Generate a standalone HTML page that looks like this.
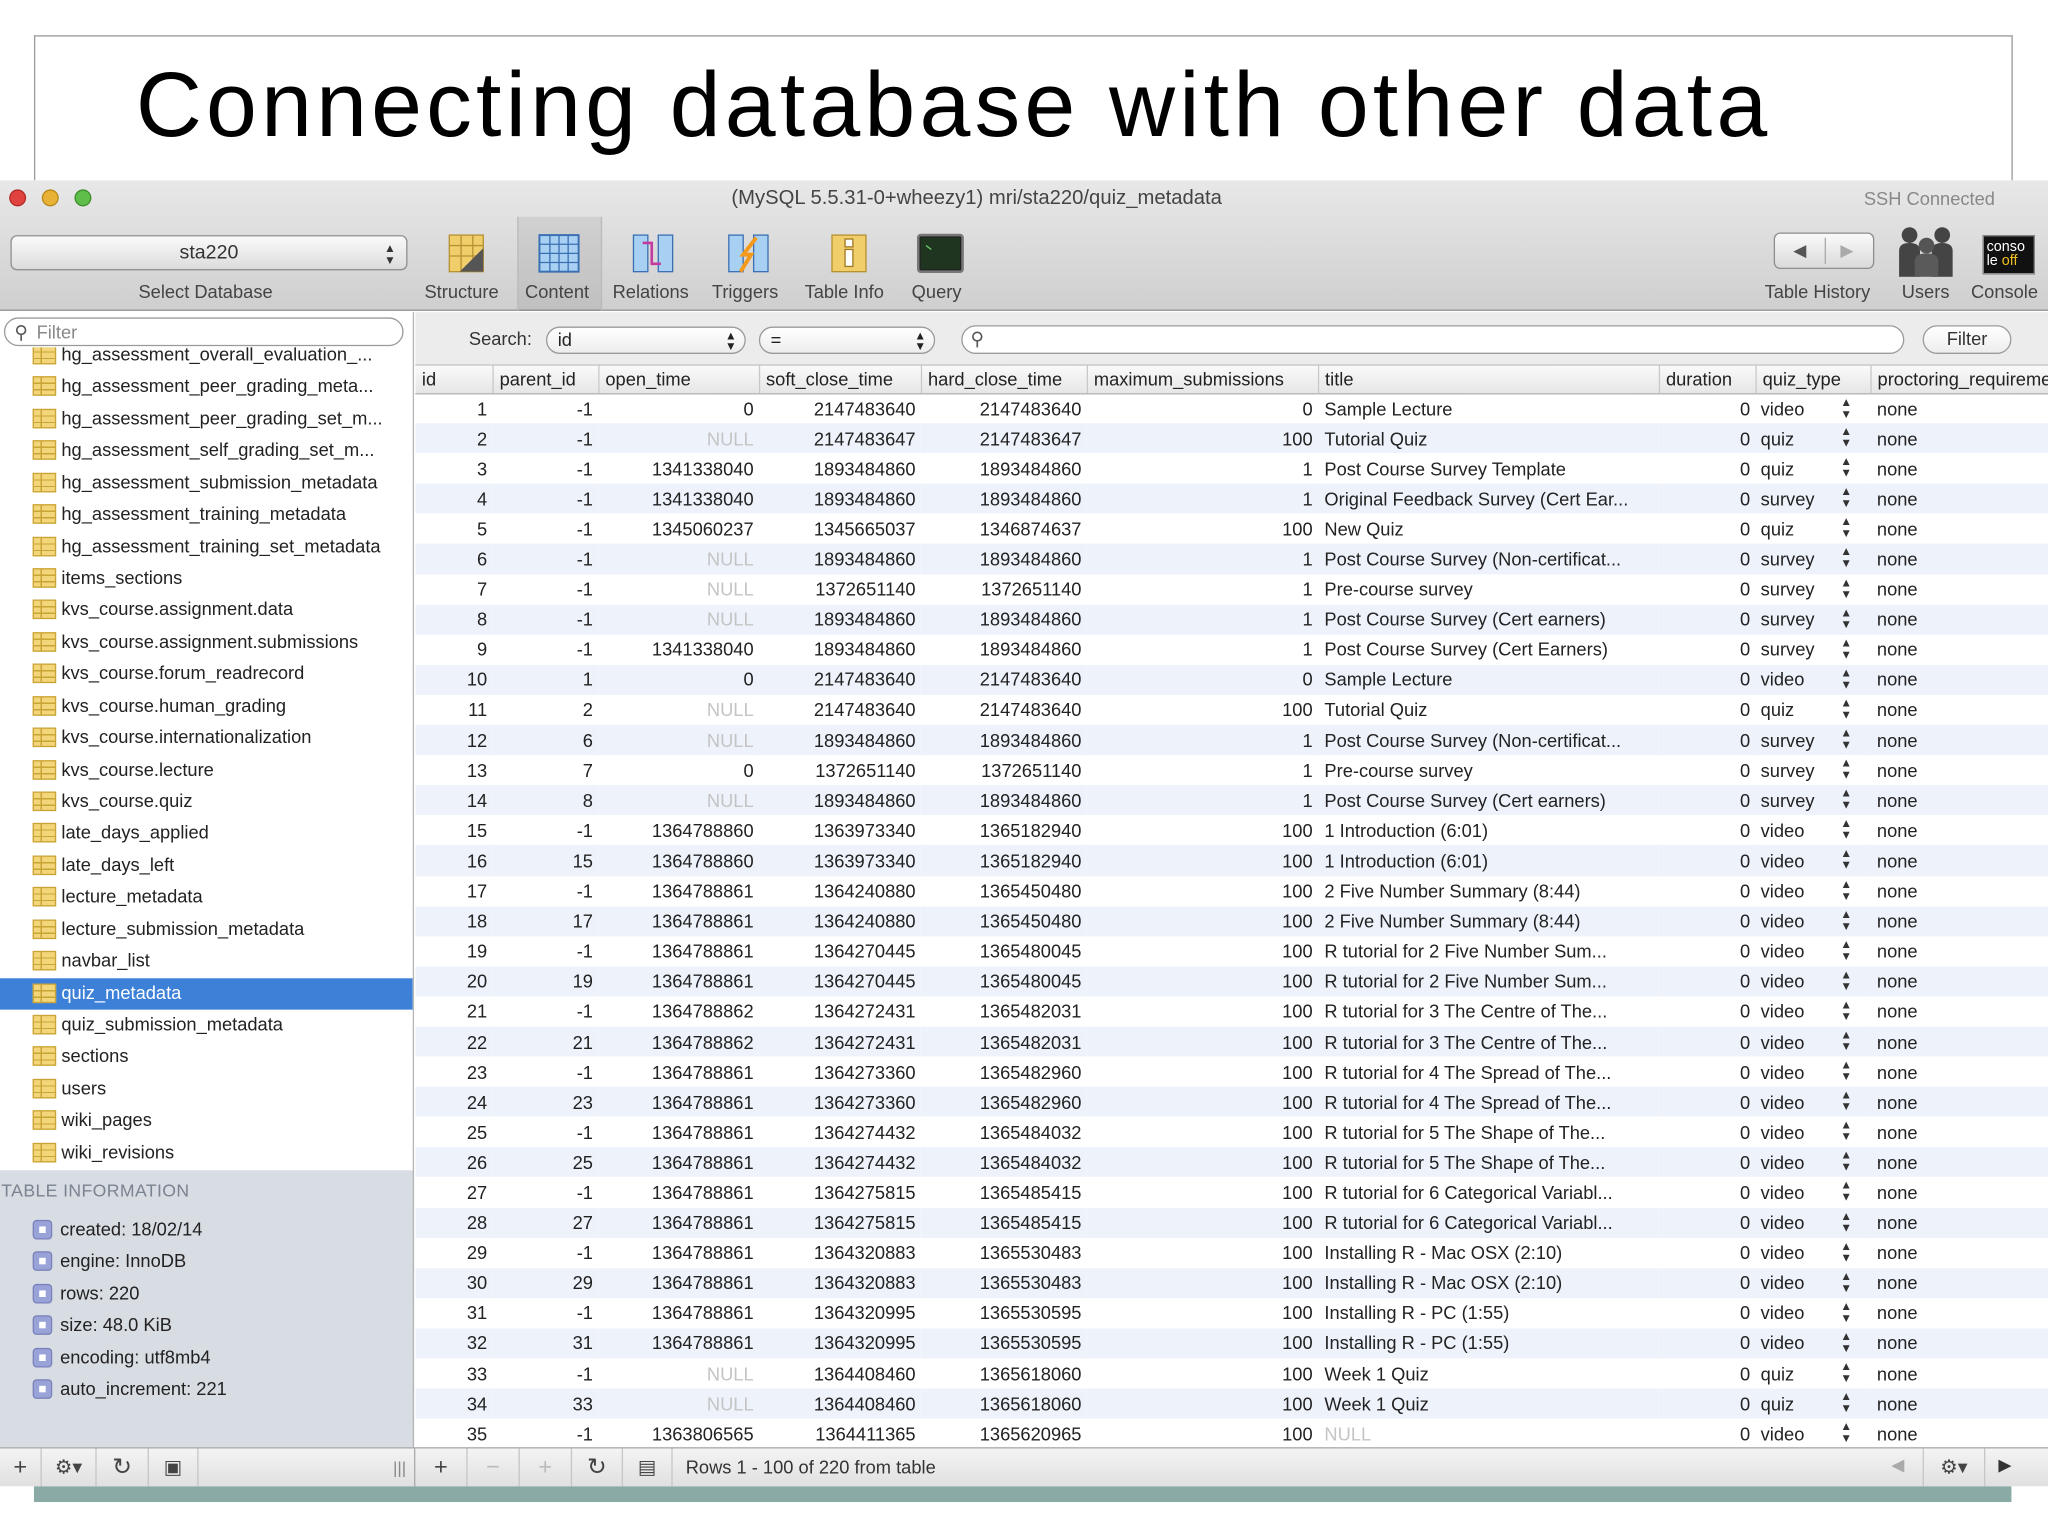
<!DOCTYPE html>
<html><head><meta charset="utf-8">
<style>
*{margin:0;padding:0;box-sizing:border-box}
html,body{width:2048px;height:1536px;overflow:hidden;background:#fff}
#w{position:absolute;left:0;top:0;width:1568px;height:1176px;transform:scale(1.306122);transform-origin:0 0;font-family:"Liberation Sans",sans-serif;color:#222}
.abs{position:absolute}
#slide{left:26px;top:27px;width:1515px;height:120px;border:1px solid #9a9a9a;border-bottom:none}
#title{left:104px;top:40px;font-size:70px;color:#000;letter-spacing:3.2px;white-space:nowrap}
#win{left:0;top:138px;width:1568px;height:1000px;background:#fff;overflow:hidden}
#tb{left:0;top:0;width:1568px;height:100px;background:linear-gradient(#e8e8e8,#cfcfcf);border-bottom:1px solid #8e8e8e}
.light{width:13px;height:13px;border-radius:50%;top:7px}
.tbl{font-size:14px;color:#444;top:77px;white-space:nowrap}
.ic{top:40px;width:32px;height:32px}
#side{left:0;top:101px;width:317px;height:869px;background:#fff;border-right:1px solid #b5b5b5}
.si{position:absolute;left:47px;font-size:14px;color:#222;white-space:nowrap}
.tic{position:absolute;left:25px;width:18px;height:15px;background:#f3d67a;border:1px solid #c9a436;background-image:linear-gradient(90deg,transparent 5px,#c9a436 5px,#c9a436 6px,transparent 6px),linear-gradient(transparent 4px,#c9a436 4px,#c9a436 5px,transparent 5px,transparent 9px,#c9a436 9px,#c9a436 10px,transparent 10px)}
#info{left:0;top:758px;width:317px;height:212px;background:#d8dce3;border-right:1px solid #b5b5b5}
.ii{position:absolute;left:46px;font-size:14px;color:#222}
.ib{position:absolute;left:25px;width:15px;height:15px;background:#9aa3d8;border:1px solid #7a82bb;border-radius:3px}
.ib:after{content:"";position:absolute;left:4px;top:4px;width:5px;height:5px;background:#fff}
#search{left:318px;top:101px;width:1250px;height:41px;background:#ececec;border-bottom:1px solid #c0c0c0}
.pill{position:absolute;border:1px solid #9b9b9b;border-radius:11px;background:linear-gradient(#fff,#ededed);height:21px;font-size:14px;padding-left:8px;line-height:19px}
#grid{left:318px;top:142px;width:1250px}
table{border-collapse:collapse;table-layout:fixed;width:1290px;font-size:14px}
th{height:21px;font-weight:normal;text-align:left;padding-left:5px;border-right:1px solid #c8c8c8;background:linear-gradient(#fafafa,#e6e6e6);border-bottom:1px solid #b8b8b8;white-space:nowrap;overflow:hidden}
td{height:23.1px;white-space:nowrap;overflow:hidden;padding:0 4px;color:#222}
tr:nth-child(even) td{background:#eef3fb}
td.r{text-align:right}
td.n{color:#c4c4c4;text-align:right}
td.t{padding-left:5px}
td.q{position:relative}
td.q span{position:absolute;right:14px;top:2px;font-size:9px;color:#333;line-height:9px}
#bot{left:0;top:970px;width:1568px;height:30px;background:linear-gradient(#f4f4f4,#e0e0e0);border-top:1px solid #a8a8a8;font-size:14px}
.bb{position:absolute;top:0;height:30px;border-right:1px solid #c6c6c6;text-align:center;line-height:29px;font-size:18px;color:#444}
#teal{left:26px;top:1138px;width:1514px;height:12px;background:#8aaaa6}
</style></head><body><div id="w">
<div id="slide" class="abs"></div>
<div id="title" class="abs">Connecting database with other data</div>
<div id="win" class="abs">
 <div id="tb" class="abs">
  <div class="abs light" style="left:7px;background:#e0433f;border:1px solid #b02a26"></div>
  <div class="abs light" style="left:32px;background:#e8b236;border:1px solid #b88816"></div>
  <div class="abs light" style="left:57px;background:#5fbd4a;border:1px solid #3b8e2a"></div>
  <div class="abs" style="left:560px;top:5px;font-size:15.5px;color:#444;white-space:nowrap">(MySQL 5.5.31-0+wheezy1) mri/sta220/quiz_metadata</div>
  <div class="abs" style="left:1427px;top:6px;font-size:14px;color:#888">SSH Connected</div>
  <div class="abs" style="left:8px;top:42px;width:304px;height:27px;border:1px solid #909090;border-radius:5px;background:linear-gradient(#fafafa,#dcdcdc);text-align:center;font-size:15px;line-height:25px;color:#333">sta220<span style="position:absolute;right:8px;font-size:9px;line-height:9px;top:5px">▲<br>▼</span></div>
  <div class="abs tbl" style="left:106px">Select Database</div>
  <div class="abs" style="left:396px;top:28px;width:65px;height:72px;background:rgba(0,0,0,0.07);border-left:1px solid #bbb;border-right:1px solid #bbb"></div>
  <svg class="abs ic" style="left:342px" viewBox="0 0 32 32"><rect x="2" y="2" width="26" height="28" fill="#f0cf6a" stroke="#b89030"/><path d="M2 10H28M2 18H28M11 2V30M20 2V30" stroke="#b89030"/><path d="M10 30L28 12V30Z" fill="#555"/></svg>
  <svg class="abs ic" style="left:412px" viewBox="0 0 32 32"><rect x="1" y="2" width="30" height="28" fill="#a8d0f2" stroke="#3b6fb4" stroke-width="1.5"/><path d="M1 9H31M1 16H31M1 23H31M9 2V30M16 2V30M23 2V30" stroke="#3b6fb4"/></svg>
  <svg class="abs ic" style="left:484px" viewBox="0 0 32 32"><rect x="1" y="2" width="11" height="28" fill="#a8d0f2" stroke="#3b6fb4"/><rect x="20" y="2" width="11" height="28" fill="#a8d0f2" stroke="#3b6fb4"/><path d="M8 8H15V24H22" stroke="#c33aa0" stroke-width="2" fill="none"/></svg>
  <svg class="abs ic" style="left:557px" viewBox="0 0 32 32"><rect x="1" y="2" width="11" height="28" fill="#a8d0f2" stroke="#3b6fb4"/><rect x="20" y="2" width="11" height="28" fill="#a8d0f2" stroke="#3b6fb4"/><path d="M22 4L12 17H18L10 30" stroke="#f39a1c" stroke-width="3" fill="none"/></svg>
  <svg class="abs ic" style="left:634px" viewBox="0 0 32 32"><rect x="3" y="2" width="26" height="28" fill="#f0cf6a" stroke="#b89030"/><rect x="13" y="5" width="6" height="6" fill="#fff" stroke="#a07820"/><rect x="13" y="13" width="6" height="13" fill="#fff" stroke="#a07820"/></svg>
  <svg class="abs ic" style="left:702px;width:36px" viewBox="0 0 36 32"><rect x="1" y="2" width="34" height="28" rx="2" fill="#222" stroke="#777" stroke-width="2"/><rect x="3" y="4" width="30" height="24" fill="#1f3520"/><path d="M7 10L11 13" stroke="#6c6" /></svg>
  <div class="abs tbl" style="left:325px">Structure</div>
  <div class="abs tbl" style="left:402px">Content</div>
  <div class="abs tbl" style="left:469px">Relations</div>
  <div class="abs tbl" style="left:545px">Triggers</div>
  <div class="abs tbl" style="left:616px">Table Info</div>
  <div class="abs tbl" style="left:698px">Query</div>
  <div class="abs" style="left:1358px;top:40px;width:77px;height:28px;border:1px solid #8e8e8e;border-radius:5px;background:linear-gradient(#fafafa,#dadada);font-size:13px;color:#555;line-height:26px"><span style="position:absolute;left:14px">◀</span><span style="position:absolute;left:38px;top:3px;height:20px;border-left:1px solid #aaa"></span><span style="position:absolute;left:50px;color:#aaa">▶</span></div>
  <svg class="abs" style="left:1452px;top:34px;width:46px;height:40px" viewBox="0 0 46 40"><circle cx="10" cy="8" r="6" fill="#444"/><circle cx="35" cy="8" r="6" fill="#444"/><path d="M2 40V20Q2 14 10 14Q18 14 18 20V40ZM27 40V20Q27 14 35 14Q43 14 43 20V40Z" fill="#444"/><circle cx="23" cy="16" r="6" fill="#555"/><path d="M14 40V28Q14 22 23 22Q32 22 32 28V40Z" fill="#5a5a5a"/></svg>
  <div class="abs" style="left:1518px;top:42px;width:40px;height:30px;background:#111;color:#fff;font-size:11px;line-height:11px;padding:3px 2px;border:1px solid #888">conso<br>le <span style="color:#f0c020">off</span></div>
  <div class="abs tbl" style="left:1351px">Table History</div>
  <div class="abs tbl" style="left:1456px">Users</div>
  <div class="abs tbl" style="left:1509px">Console</div>
 </div>
 <div id="side" class="abs">
  <div class="abs" style="left:3px;top:4px;width:306px;height:22px;border:1px solid #9a9a9a;border-radius:11px;background:#fff;font-size:14px;color:#888;padding-left:24px;line-height:20px">Filter<span style="position:absolute;left:7px;top:0;color:#555">&#9906;</span></div>
  <div id="list"></div>
 </div>
 <div id="info" class="abs">
  <div class="abs" style="left:1px;top:8px;font-size:13.5px;color:#7a8390;letter-spacing:0.3px">TABLE INFORMATION</div>
 </div>
 <div id="search" class="abs">
  <div class="abs" style="left:41px;top:12px;font-size:14px;color:#333">Search:</div>
  <div class="pill" style="left:100px;top:11px;width:153px">id<span style="position:absolute;right:6px;font-size:9px;line-height:8px;top:2px">▲<br>▼</span></div>
  <div class="pill" style="left:263px;top:11px;width:135px">=<span style="position:absolute;right:6px;font-size:9px;line-height:8px;top:2px">▲<br>▼</span></div>
  <div class="pill" style="left:418px;top:10px;width:722px;height:22px;background:#fff;padding-left:26px"><span style="position:absolute;left:6px;color:#555">&#9906;</span></div>
  <div class="pill" style="left:1154px;top:10px;width:68px;height:22px;text-align:center;padding:0;color:#333">Filter</div>
 </div>
 <div id="grid" class="abs">
 <table>
 <colgroup><col style="width:59px"><col style="width:81px"><col style="width:123px"><col style="width:124px"><col style="width:127px"><col style="width:177px"><col style="width:261px"><col style="width:74px"><col style="width:88px"><col style="width:176px"></colgroup>
 <tr><th>id</th><th>parent_id</th><th>open_time</th><th>soft_close_time</th><th>hard_close_time</th><th>maximum_submissions</th><th>title</th><th>duration</th><th>quiz_type</th><th>proctoring_requirements</th></tr>
 <tbody id="rows"></tbody>
 </table>
 </div>
 <div id="bot" class="abs">
  <div class="bb" style="left:0;width:32px">+</div>
  <div class="bb" style="left:32px;width:42px;font-size:15px">⚙▾</div>
  <div class="bb" style="left:74px;width:40px">↻</div>
  <div class="bb" style="left:114px;width:38px;font-size:15px">▣</div>
  <div class="bb" style="left:152px;width:166px;text-align:right;padding-right:6px;font-size:13px;color:#888;border-right:1px solid #aaa">|||</div>
  <div class="bb" style="left:318px;width:40px">+</div>
  <div class="bb" style="left:358px;width:40px;color:#bbb">−</div>
  <div class="bb" style="left:398px;width:40px;color:#bbb">+</div>
  <div class="bb" style="left:438px;width:39px">↻</div>
  <div class="bb" style="left:477px;width:38px;font-size:15px">▤</div>
  <div class="abs" style="left:525px;top:6px;color:#333">Rows 1 - 100 of 220 from table</div>
  <div class="abs" style="left:1448px;top:5px;color:#aaa;font-size:13px">◀</div>
  <div class="bb" style="left:1472px;width:48px;border-left:1px solid #c6c6c6;font-size:15px">⚙▾</div>
  <div class="abs" style="left:1530px;top:5px;color:#333;font-size:13px">▶</div>
 </div>
</div>
<div id="teal" class="abs"></div>
</div>
<script>
var items=["hg_assessment_overall_evaluation_...","hg_assessment_peer_grading_meta...","hg_assessment_peer_grading_set_m...","hg_assessment_self_grading_set_m...","hg_assessment_submission_metadata","hg_assessment_training_metadata","hg_assessment_training_set_metadata","items_sections","kvs_course.assignment.data","kvs_course.assignment.submissions","kvs_course.forum_readrecord","kvs_course.human_grading","kvs_course.internationalization","kvs_course.lecture","kvs_course.quiz","late_days_applied","late_days_left","lecture_metadata","lecture_submission_metadata","navbar_list","quiz_metadata","quiz_submission_metadata","sections","users","wiki_pages","wiki_revisions"];
var h="";
for(var i=0;i<items.length;i++){var y=-2+i*24.43;
 if(i==20)h+='<div style="position:absolute;left:0;top:'+(y-4)+'px;width:316px;height:24px;background:#3d80d8"></div>';
 h+='<div class="tic" style="top:'+(y)+'px"></div><div class="si" style="top:'+(y-1)+'px'+(i==20?';color:#fff':'')+'">'+items[i]+'</div>';}
var L=document.getElementById('list');L.innerHTML='<div style="position:absolute;left:0;top:27px;width:316px;height:630px;overflow:hidden"><div style="position:absolute;top:0;left:0">'+h+'</div></div>';
var inf=["created: 18/02/14","engine: InnoDB","rows: 220","size: 48.0 KiB","encoding: utf8mb4","auto_increment: 221"];h="";
for(i=0;i<6;i++){var y=37+i*24.4;h+='<div class="ib" style="top:'+(y+1)+'px"></div><div class="ii" style="top:'+y+'px">'+inf[i]+'</div>';}
document.getElementById('info').insertAdjacentHTML('beforeend',h);
var R=[
[1,-1,0,2147483640,2147483640,0,"Sample Lecture","video"],
[2,-1,"N",2147483647,2147483647,100,"Tutorial Quiz","quiz"],
[3,-1,1341338040,1893484860,1893484860,1,"Post Course Survey Template","quiz"],
[4,-1,1341338040,1893484860,1893484860,1,"Original Feedback Survey (Cert Ear...","survey"],
[5,-1,1345060237,1345665037,1346874637,100,"New Quiz","quiz"],
[6,-1,"N",1893484860,1893484860,1,"Post Course Survey (Non-certificat...","survey"],
[7,-1,"N",1372651140,1372651140,1,"Pre-course survey","survey"],
[8,-1,"N",1893484860,1893484860,1,"Post Course Survey (Cert earners)","survey"],
[9,-1,1341338040,1893484860,1893484860,1,"Post Course Survey (Cert Earners)","survey"],
[10,1,0,2147483640,2147483640,0,"Sample Lecture","video"],
[11,2,"N",2147483640,2147483640,100,"Tutorial Quiz","quiz"],
[12,6,"N",1893484860,1893484860,1,"Post Course Survey (Non-certificat...","survey"],
[13,7,0,1372651140,1372651140,1,"Pre-course survey","survey"],
[14,8,"N",1893484860,1893484860,1,"Post Course Survey (Cert earners)","survey"],
[15,-1,1364788860,1363973340,1365182940,100,"1 Introduction (6:01)","video"],
[16,15,1364788860,1363973340,1365182940,100,"1 Introduction (6:01)","video"],
[17,-1,1364788861,1364240880,1365450480,100,"2 Five Number Summary (8:44)","video"],
[18,17,1364788861,1364240880,1365450480,100,"2 Five Number Summary (8:44)","video"],
[19,-1,1364788861,1364270445,1365480045,100,"R tutorial for 2 Five Number Sum...","video"],
[20,19,1364788861,1364270445,1365480045,100,"R tutorial for 2 Five Number Sum...","video"],
[21,-1,1364788862,1364272431,1365482031,100,"R tutorial for 3 The Centre of The...","video"],
[22,21,1364788862,1364272431,1365482031,100,"R tutorial for 3 The Centre of The...","video"],
[23,-1,1364788861,1364273360,1365482960,100,"R tutorial for 4 The Spread of The...","video"],
[24,23,1364788861,1364273360,1365482960,100,"R tutorial for 4 The Spread of The...","video"],
[25,-1,1364788861,1364274432,1365484032,100,"R tutorial for 5 The Shape of The...","video"],
[26,25,1364788861,1364274432,1365484032,100,"R tutorial for 5 The Shape of The...","video"],
[27,-1,1364788861,1364275815,1365485415,100,"R tutorial for 6 Categorical Variabl...","video"],
[28,27,1364788861,1364275815,1365485415,100,"R tutorial for 6 Categorical Variabl...","video"],
[29,-1,1364788861,1364320883,1365530483,100,"Installing R - Mac OSX (2:10)","video"],
[30,29,1364788861,1364320883,1365530483,100,"Installing R - Mac OSX (2:10)","video"],
[31,-1,1364788861,1364320995,1365530595,100,"Installing R - PC (1:55)","video"],
[32,31,1364788861,1364320995,1365530595,100,"Installing R - PC (1:55)","video"],
[33,-1,"N",1364408460,1365618060,100,"Week 1 Quiz","quiz"],
[34,33,"N",1364408460,1365618060,100,"Week 1 Quiz","quiz"],
[35,-1,1363806565,1364411365,1365620965,100,"N","video"]];
h="";
for(i=0;i<R.length;i++){var r=R[i];h+='<tr><td class="r">'+r[0]+'</td><td class="r">'+r[1]+'</td>'+(r[2]=="N"?'<td class="n">NULL</td>':'<td class="r">'+r[2]+'</td>')+'<td class="r">'+r[3]+'</td><td class="r">'+r[4]+'</td><td class="r">'+r[5]+'</td>'+(r[6]=="N"?'<td class="t" style="color:#c4c4c4">NULL</td>':'<td class="t">'+r[6]+'</td>')+'<td class="r">0</td><td class="q">'+r[7]+'<span>▲<br>▼</span></td><td class="t">none</td></tr>';}
document.getElementById('rows').innerHTML=h;
</script>
</body></html>
